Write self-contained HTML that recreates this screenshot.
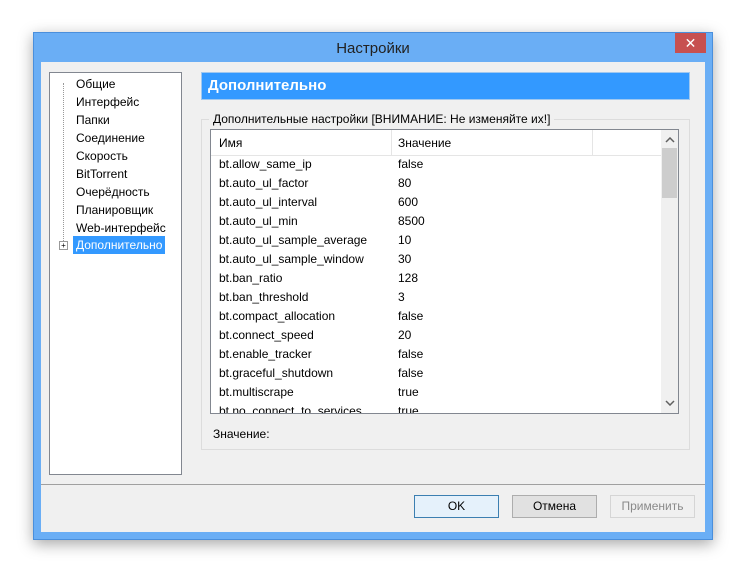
<!DOCTYPE html><html><head><meta charset="utf-8"><style>
body{margin:0;width:745px;height:572px;background:#fff;font-family:"Liberation Sans","DejaVu Sans",sans-serif;font-size:12px;color:#000;position:relative;overflow:hidden}
.a{position:absolute}
.win{left:33px;top:32px;width:680px;height:508px;background:#6aaef5;border:1px solid #4a8fdc;box-sizing:border-box;box-shadow:0 4px 14px rgba(0,0,0,.35)}
.client{left:41px;top:62px;width:664px;height:470px;background:#f0f0f0}
.tree div{height:18px;line-height:18px;position:absolute;left:26px}
.row{position:absolute;left:8px;height:19px;line-height:19px}
.btn{position:absolute;top:495px;width:85px;height:23px;box-sizing:border-box;border:1px solid #adadad;background:#e1e1e1;text-align:center;line-height:21px}
</style></head><body>
<div class="a win"></div>
<div class="a" style="left:33px;top:40px;width:680px;text-align:center;font-size:15px;color:#222">Настройки</div>
<div class="a" style="left:675px;top:33px;width:31px;height:20px;background:#c75050;color:#fff;text-align:center;line-height:20px;font-size:14px">✕</div>
<div class="a client"></div>
<div class="a tree" style="left:49px;top:72px;width:133px;height:403px;background:#fff;border:1px solid #828790;box-sizing:border-box">
<div class="a" style="left:13px;top:10px;width:0;height:164px;border-left:1px dotted #999"></div>
<div style="top:2px">Общие</div><div style="top:20px">Интерфейс</div><div style="top:38px">Папки</div><div style="top:56px">Соединение</div><div style="top:74px">Скорость</div><div style="top:92px">BitTorrent</div><div style="top:110px">Очерёдность</div><div style="top:128px">Планировщик</div><div style="top:146px">Web-интерфейс</div>
<div style="top:163px;left:23px;background:#3399ff;color:#fff;padding:0 3px">Дополнительно</div>
<div class="a" style="left:9px;top:168px;width:7px;height:7px;border:1px solid #999;background:#fff;font-size:8px;line-height:7px;text-align:center">+</div>
</div>
<div class="a" style="left:201px;top:72px;width:489px;height:28px;background:#3399ff;border:1px solid #a0c8f0;box-sizing:border-box;color:#fff;font-weight:bold;font-size:15px;line-height:26px;padding-left:6px">Дополнительно</div>
<div class="a" style="left:201px;top:119px;width:489px;height:331px;border:1px solid #dcdcdc;box-sizing:border-box"></div>
<div class="a" style="left:209px;top:112px;background:#f0f0f0;padding:0 4px">Дополнительные настройки [ВНИМАНИЕ: Не изменяйте их!]</div>
<div class="a" style="left:210px;top:129px;width:469px;height:285px;background:#fff;border:1px solid #828790;box-sizing:border-box;overflow:hidden">
<div class="a" style="left:0;top:0;width:450px;height:25px;border-bottom:1px solid #e5e5e5"></div>
<div class="a" style="left:180px;top:0;height:25px;border-left:1px solid #e5e5e5"></div>
<div class="a" style="left:381px;top:0;height:25px;border-left:1px solid #e5e5e5"></div>
<div class="a" style="left:8px;top:6px">Имя</div><div class="a" style="left:187px;top:6px">Значение</div>
<div class="a" style="left:450px;top:0;width:17px;height:283px;background:#f0f0f0"></div>
<div class="a" style="left:451px;top:18px;width:15px;height:50px;background:#cdcdcd"></div>
<svg class="a" style="left:454px;top:7px" width="10" height="6"><path d="M1 5L5 1L9 5" stroke="#606060" stroke-width="1.5" fill="none"/></svg>
<svg class="a" style="left:454px;top:270px" width="10" height="6"><path d="M1 1L5 5L9 1" stroke="#606060" stroke-width="1.5" fill="none"/></svg>
<div class="a" style="left:0;top:25px;width:450px">
<div class="row" style="top:0">bt.allow_same_ip</div><div class="row" style="top:0;left:187px">false</div>
<div class="row" style="top:19px">bt.auto_ul_factor</div><div class="row" style="top:19px;left:187px">80</div>
<div class="row" style="top:38px">bt.auto_ul_interval</div><div class="row" style="top:38px;left:187px">600</div>
<div class="row" style="top:57px">bt.auto_ul_min</div><div class="row" style="top:57px;left:187px">8500</div>
<div class="row" style="top:76px">bt.auto_ul_sample_average</div><div class="row" style="top:76px;left:187px">10</div>
<div class="row" style="top:95px">bt.auto_ul_sample_window</div><div class="row" style="top:95px;left:187px">30</div>
<div class="row" style="top:114px">bt.ban_ratio</div><div class="row" style="top:114px;left:187px">128</div>
<div class="row" style="top:133px">bt.ban_threshold</div><div class="row" style="top:133px;left:187px">3</div>
<div class="row" style="top:152px">bt.compact_allocation</div><div class="row" style="top:152px;left:187px">false</div>
<div class="row" style="top:171px">bt.connect_speed</div><div class="row" style="top:171px;left:187px">20</div>
<div class="row" style="top:190px">bt.enable_tracker</div><div class="row" style="top:190px;left:187px">false</div>
<div class="row" style="top:209px">bt.graceful_shutdown</div><div class="row" style="top:209px;left:187px">false</div>
<div class="row" style="top:228px">bt.multiscrape</div><div class="row" style="top:228px;left:187px">true</div>
<div class="row" style="top:247px">bt.no_connect_to_services</div><div class="row" style="top:247px;left:187px">true</div>
</div></div>
<div class="a" style="left:213px;top:427px">Значение:</div>
<div class="a" style="left:41px;top:484px;width:664px;border-top:1px solid #a0a0a0"></div>
<div class="btn" style="left:414px;border-color:#3c7fb1;background:#e5f1fb">OK</div>
<div class="btn" style="left:512px">Отмена</div>
<div class="btn" style="left:610px;border-color:#d5d5d5;background:#f0f0f0;color:#8a8a8a">Применить</div>
</body></html>
